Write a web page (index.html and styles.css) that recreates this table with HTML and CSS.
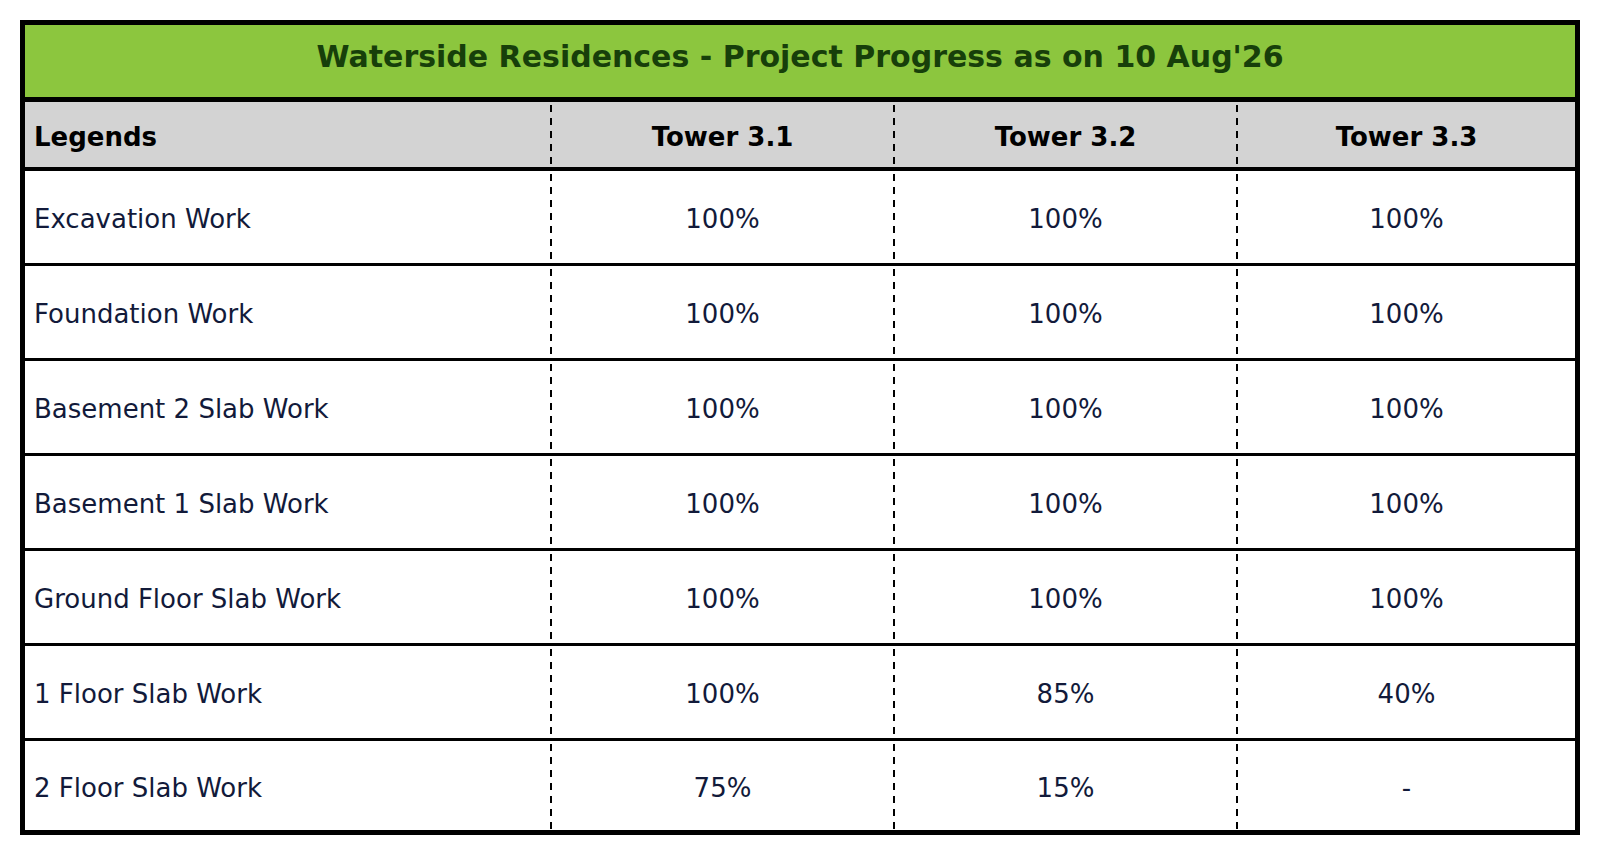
FILE: index.html
```html
<!DOCTYPE html>
<html lang="en">
<head>
<meta charset="utf-8">
<title>Waterside Residences - Project Progress</title>
<link rel="stylesheet" href="styles.css">
</head>
<body>
<div class="sheet">
  <div class="title">Waterside Residences - Project Progress as on 10 Aug'26</div>
  <div class="row head">
    <div class="cell label">Legends</div>
    <div class="cell">Tower 3.1</div>
    <div class="cell">Tower 3.2</div>
    <div class="cell">Tower 3.3</div>
  </div>
  <div class="row">
    <div class="cell label">Excavation Work</div>
    <div class="cell">100%</div>
    <div class="cell">100%</div>
    <div class="cell">100%</div>
  </div>
  <div class="row">
    <div class="cell label">Foundation Work</div>
    <div class="cell">100%</div>
    <div class="cell">100%</div>
    <div class="cell">100%</div>
  </div>
  <div class="row">
    <div class="cell label">Basement 2 Slab Work</div>
    <div class="cell">100%</div>
    <div class="cell">100%</div>
    <div class="cell">100%</div>
  </div>
  <div class="row">
    <div class="cell label">Basement 1 Slab Work</div>
    <div class="cell">100%</div>
    <div class="cell">100%</div>
    <div class="cell">100%</div>
  </div>
  <div class="row">
    <div class="cell label">Ground Floor Slab Work</div>
    <div class="cell">100%</div>
    <div class="cell">100%</div>
    <div class="cell">100%</div>
  </div>
  <div class="row">
    <div class="cell label">1 Floor Slab Work</div>
    <div class="cell">100%</div>
    <div class="cell">85%</div>
    <div class="cell">40%</div>
  </div>
  <div class="row last">
    <div class="cell label">2 Floor Slab Work</div>
    <div class="cell">75%</div>
    <div class="cell">15%</div>
    <div class="cell">-</div>
  </div>
</div>
</body>
</html>
```
FILE: styles.css
```css
html, body {
  margin: 0;
  padding: 0;
  background: #ffffff;
}
body {
  padding: 20px;
  font-family: "DejaVu Sans", "Liberation Sans", sans-serif;
}
.sheet {
  width: 1560px;
  box-sizing: border-box;
  border: 5px solid #000;
  display: flex;
  flex-direction: column;
}
.title {
  height: 77px;
  box-sizing: border-box;
  padding-bottom: 10px;
  background: #8cc63e;
  color: #173f0a;
  font-weight: bold;
  font-size: 30px;
  display: flex;
  align-items: center;
  justify-content: center;
  border-bottom: 5px solid #000;
}
.row {
  display: grid;
  grid-template-columns: 525px 343px 343px 1fr;
  height: 95px;
  box-sizing: border-box;
  border-bottom: 3px solid #000;
  color: #121a3a;
  font-size: 26px;
}
.row.head {
  height: 69px;
  border-bottom: 4px solid #000;
  background-color: #d3d3d3;
  color: #000;
  font-weight: bold;
}
.row.last {
  height: 89px;
  border-bottom: none;
}
.cell {
  display: flex;
  align-items: center;
  justify-content: center;
  padding-top: 4px;
  padding-left: 2px;
  box-sizing: border-box;
  background-image: repeating-linear-gradient(to bottom, transparent 0 3px, #000 3px 10px, transparent 10px 13px);
  background-size: 2px 100%;
  background-repeat: no-repeat;
  background-position: left top;
}
.cell.label {
  justify-content: flex-start;
  padding-left: 9px;
  background-image: none;
}
```
